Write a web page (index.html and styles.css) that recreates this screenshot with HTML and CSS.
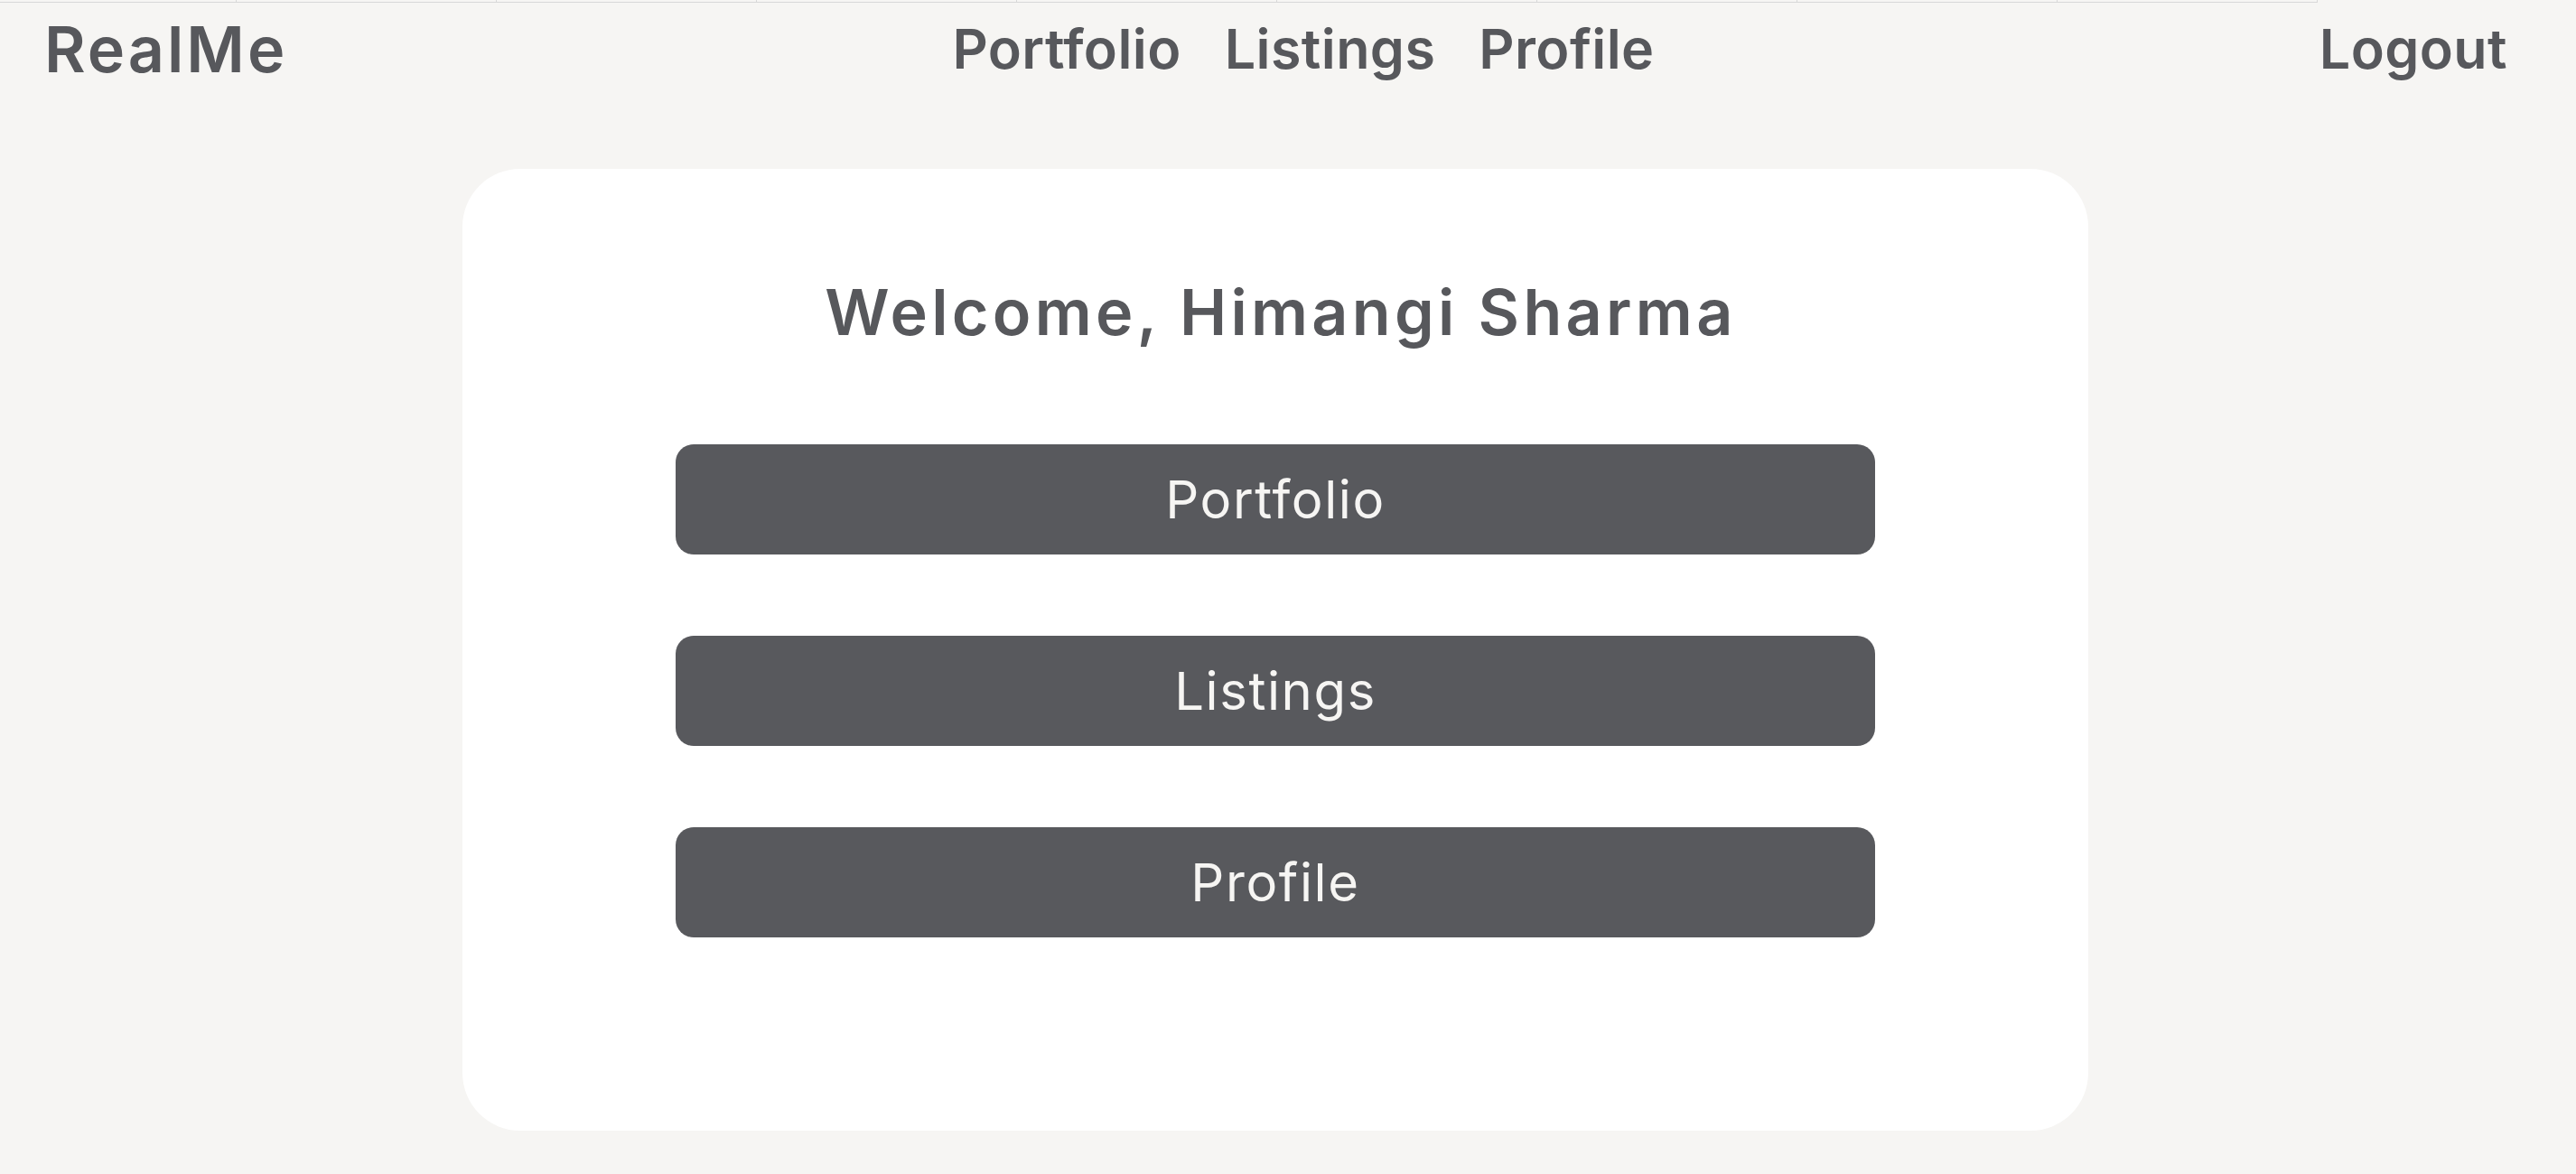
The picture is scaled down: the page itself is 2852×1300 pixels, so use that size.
FILE: index.html
```html
<!DOCTYPE html>
<html lang="en">
<head>
<meta charset="utf-8">
<title>RealMe</title>
<link rel="stylesheet" href="styles.css">
</head>
<body>
<div class="ruler">
  <span class="cell first"></span>
  <span class="cell"></span>
  <span class="cell"></span>
  <span class="cell"></span>
  <span class="cell"></span>
  <span class="cell"></span>
  <span class="cell"></span>
  <span class="cell"></span>
  <span class="cell"></span>
</div>
<div class="page">
  <header class="header">
    <a class="logo" href="#">RealMe</a>
    <nav class="nav">
      <a href="#">Portfolio</a>
      <a href="#">Listings</a>
      <a href="#">Profile</a>
    </nav>
    <a class="logout" href="#">Logout</a>
  </header>
  <main class="card">
    <h1 class="welcome">Welcome, Himangi Sharma</h1>
    <div class="actions">
      <button class="btn">Portfolio</button>
      <button class="btn">Listings</button>
      <button class="btn">Profile</button>
    </div>
  </main>
</div>
</body>
</html>
```

FILE: styles.css
```css
* { box-sizing: border-box; }

html, body {
  margin: 0;
  padding: 0;
  background: #f6f5f3;
  height: 100%;
}

body {
  font-family: "Inter", "Noto Sans", sans-serif;
  color: #57585c;
  overflow: hidden;
}

.ruler {
  display: flex;
  height: 3px;
  width: 2566px;
  border-bottom: 1px solid #d8d8d8;
}

.cell {
  width: 288px;
  height: 3px;
  border-right: 1px solid #d8d8d8;
  flex: none;
}

.cell.first { width: 262px; }

.page {
  width: 2824px;
}

.header {
  display: flex;
  justify-content: space-between;
  align-items: center;
  padding: 0 48px 0 49px;
  height: 102px;
}

.header a {
  color: #57585c;
  text-decoration: none;
  font-weight: 600;
}

.logo {
  font-size: 70px;
  letter-spacing: 3px;
}

.nav {
  display: flex;
  gap: 48px;
}

.nav a,
.logout {
  font-size: 61px;
  letter-spacing: 0.4px;
}

.card {
  width: 1800px;
  margin: 82px auto 0;
  background: #ffffff;
  border-radius: 64px;
  padding: 117px 236px 214px;
  display: flex;
  flex-direction: column;
  align-items: center;
}

.welcome {
  margin: 0;
  padding-left: 12px;
  font-size: 70px;
  font-weight: 600;
  line-height: 84px;
  letter-spacing: 4.3px;
  color: #57585c;
}

.actions {
  margin-top: 104px;
  display: flex;
  flex-direction: column;
  gap: 90px;
  width: 100%;
}

.btn {
  height: 122px;
  width: 100%;
  border: none;
  border-radius: 20px;
  background: #58595d;
  color: #f6f5f3;
  font-family: "Inter", "Noto Sans", sans-serif;
  font-size: 58px;
  font-weight: 400;
  letter-spacing: 1.6px;
  padding: 0;
  cursor: pointer;
}
```
